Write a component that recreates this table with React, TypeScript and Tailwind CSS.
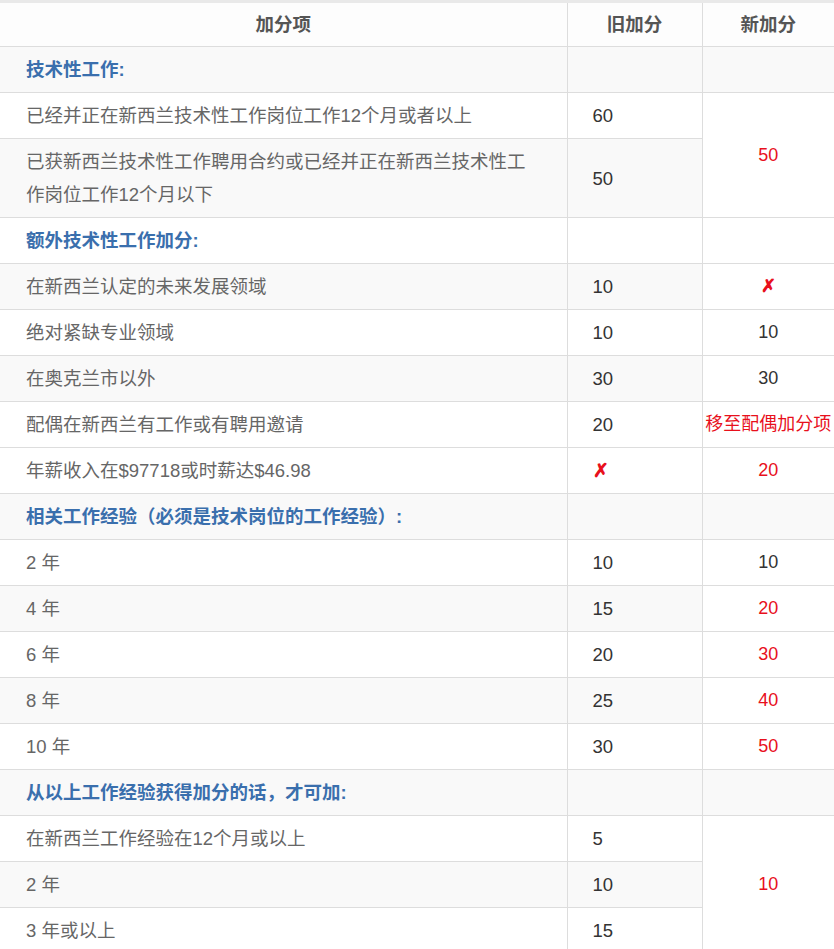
import React from "react";

type Row =
  | { kind: "section"; label: string; bg: string }
  | {
      kind: "item";
      label: React.ReactNode;
      old: React.ReactNode;
      neu?: React.ReactNode;
      rowSpan?: number;
      bg: string;
      neuRed?: boolean;
    };

const GREY = "bg-[#f9f9f9]";
const WHITE = "bg-white";

const X = () => <span className="text-[#e8101c] font-bold">✗</span>;

const rows: Row[] = [
  { kind: "section", label: "技术性工作:", bg: GREY },
  { kind: "item", label: "已经并正在新西兰技术性工作岗位工作12个月或者以上", old: "60", neu: "50", rowSpan: 2, neuRed: true, bg: WHITE },
  { kind: "item", label: "已获新西兰技术性工作聘用合约或已经并正在新西兰技术性工作岗位工作12个月以下", old: "50", bg: GREY },
  { kind: "section", label: "额外技术性工作加分:", bg: WHITE },
  { kind: "item", label: "在新西兰认定的未来发展领域", old: "10", neu: <X />, bg: GREY },
  { kind: "item", label: "绝对紧缺专业领域", old: "10", neu: "10", bg: WHITE },
  { kind: "item", label: "在奥克兰市以外", old: "30", neu: "30", bg: GREY },
  { kind: "item", label: "配偶在新西兰有工作或有聘用邀请", old: "20", neu: "移至配偶加分项", neuRed: true, bg: WHITE },
  { kind: "item", label: "年薪收入在$97718或时薪达$46.98", old: <X />, neu: "20", neuRed: true, bg: WHITE },
  { kind: "section", label: "相关工作经验（必须是技术岗位的工作经验）:", bg: GREY },
  { kind: "item", label: "2 年", old: "10", neu: "10", bg: WHITE },
  { kind: "item", label: "4 年", old: "15", neu: "20", neuRed: true, bg: GREY },
  { kind: "item", label: "6 年", old: "20", neu: "30", neuRed: true, bg: WHITE },
  { kind: "item", label: "8 年", old: "25", neu: "40", neuRed: true, bg: GREY },
  { kind: "item", label: "10 年", old: "30", neu: "50", neuRed: true, bg: WHITE },
  { kind: "section", label: "从以上工作经验获得加分的话，才可加:", bg: GREY },
  { kind: "item", label: "在新西兰工作经验在12个月或以上", old: "5", neu: "10", rowSpan: 3, neuRed: true, bg: WHITE },
  { kind: "item", label: "2 年", old: "10", bg: GREY },
  { kind: "item", label: "3 年或以上", old: "15", bg: WHITE },
];

export default function App() {
  return (
    <div className="w-[834px] bg-white">
      <table
        className="w-[834px] table-fixed border-collapse border-t-[3px] border-t-[#e9e9e9] text-[18.5px] leading-[33px] text-[#666]"
        style={{ fontFamily: '"Liberation Sans", "Noto Sans CJK SC", sans-serif' }}
      >
        <colgroup>
          <col className="w-[567px]" />
          <col className="w-[135px]" />
          <col className="w-[132px]" />
        </colgroup>
        <thead>
          <tr className="bg-[#fdfdfd]">
            <th className="h-[45px] border-b border-[#dddddd] p-0 text-center font-bold text-[#555]">加分项</th>
            <th className="h-[45px] border-b border-l border-[#dddddd] p-0 text-center font-bold text-[#555]">旧加分</th>
            <th className="h-[45px] border-b border-l border-[#dddddd] p-0 text-center font-bold text-[#555]">新加分</th>
          </tr>
        </thead>
        <tbody>
          {rows.map((r, i) =>
            r.kind === "section" ? (
              <tr key={i} className={r.bg}>
                <td className="h-[45px] border-b border-[#dddddd] py-[6px] pl-[26px] font-bold text-[#3a6fad]">{r.label}</td>
                <td className="border-b border-l border-[#dddddd]"></td>
                <td className="border-b border-l border-[#dddddd]"></td>
              </tr>
            ) : (
              <tr key={i} className={r.bg}>
                <td className="h-[45px] border-b border-[#dddddd] py-[6px] pl-[26px] pr-[28px]">{r.label}</td>
                <td className="border-b border-l border-[#dddddd] py-[6px] pl-[25px] text-[#333]">{r.old}</td>
                {r.neu !== undefined && (
                  <td
                    rowSpan={r.rowSpan}
                    className={`whitespace-nowrap border-b border-l border-[#dddddd] bg-white px-0 py-[6px] text-center text-[18px] ${r.neuRed ? "text-[#e8101c]" : "text-[#333]"}`}
                  >
                    {r.neu}
                  </td>
                )}
              </tr>
            )
          )}
        </tbody>
      </table>
    </div>
  );
}
